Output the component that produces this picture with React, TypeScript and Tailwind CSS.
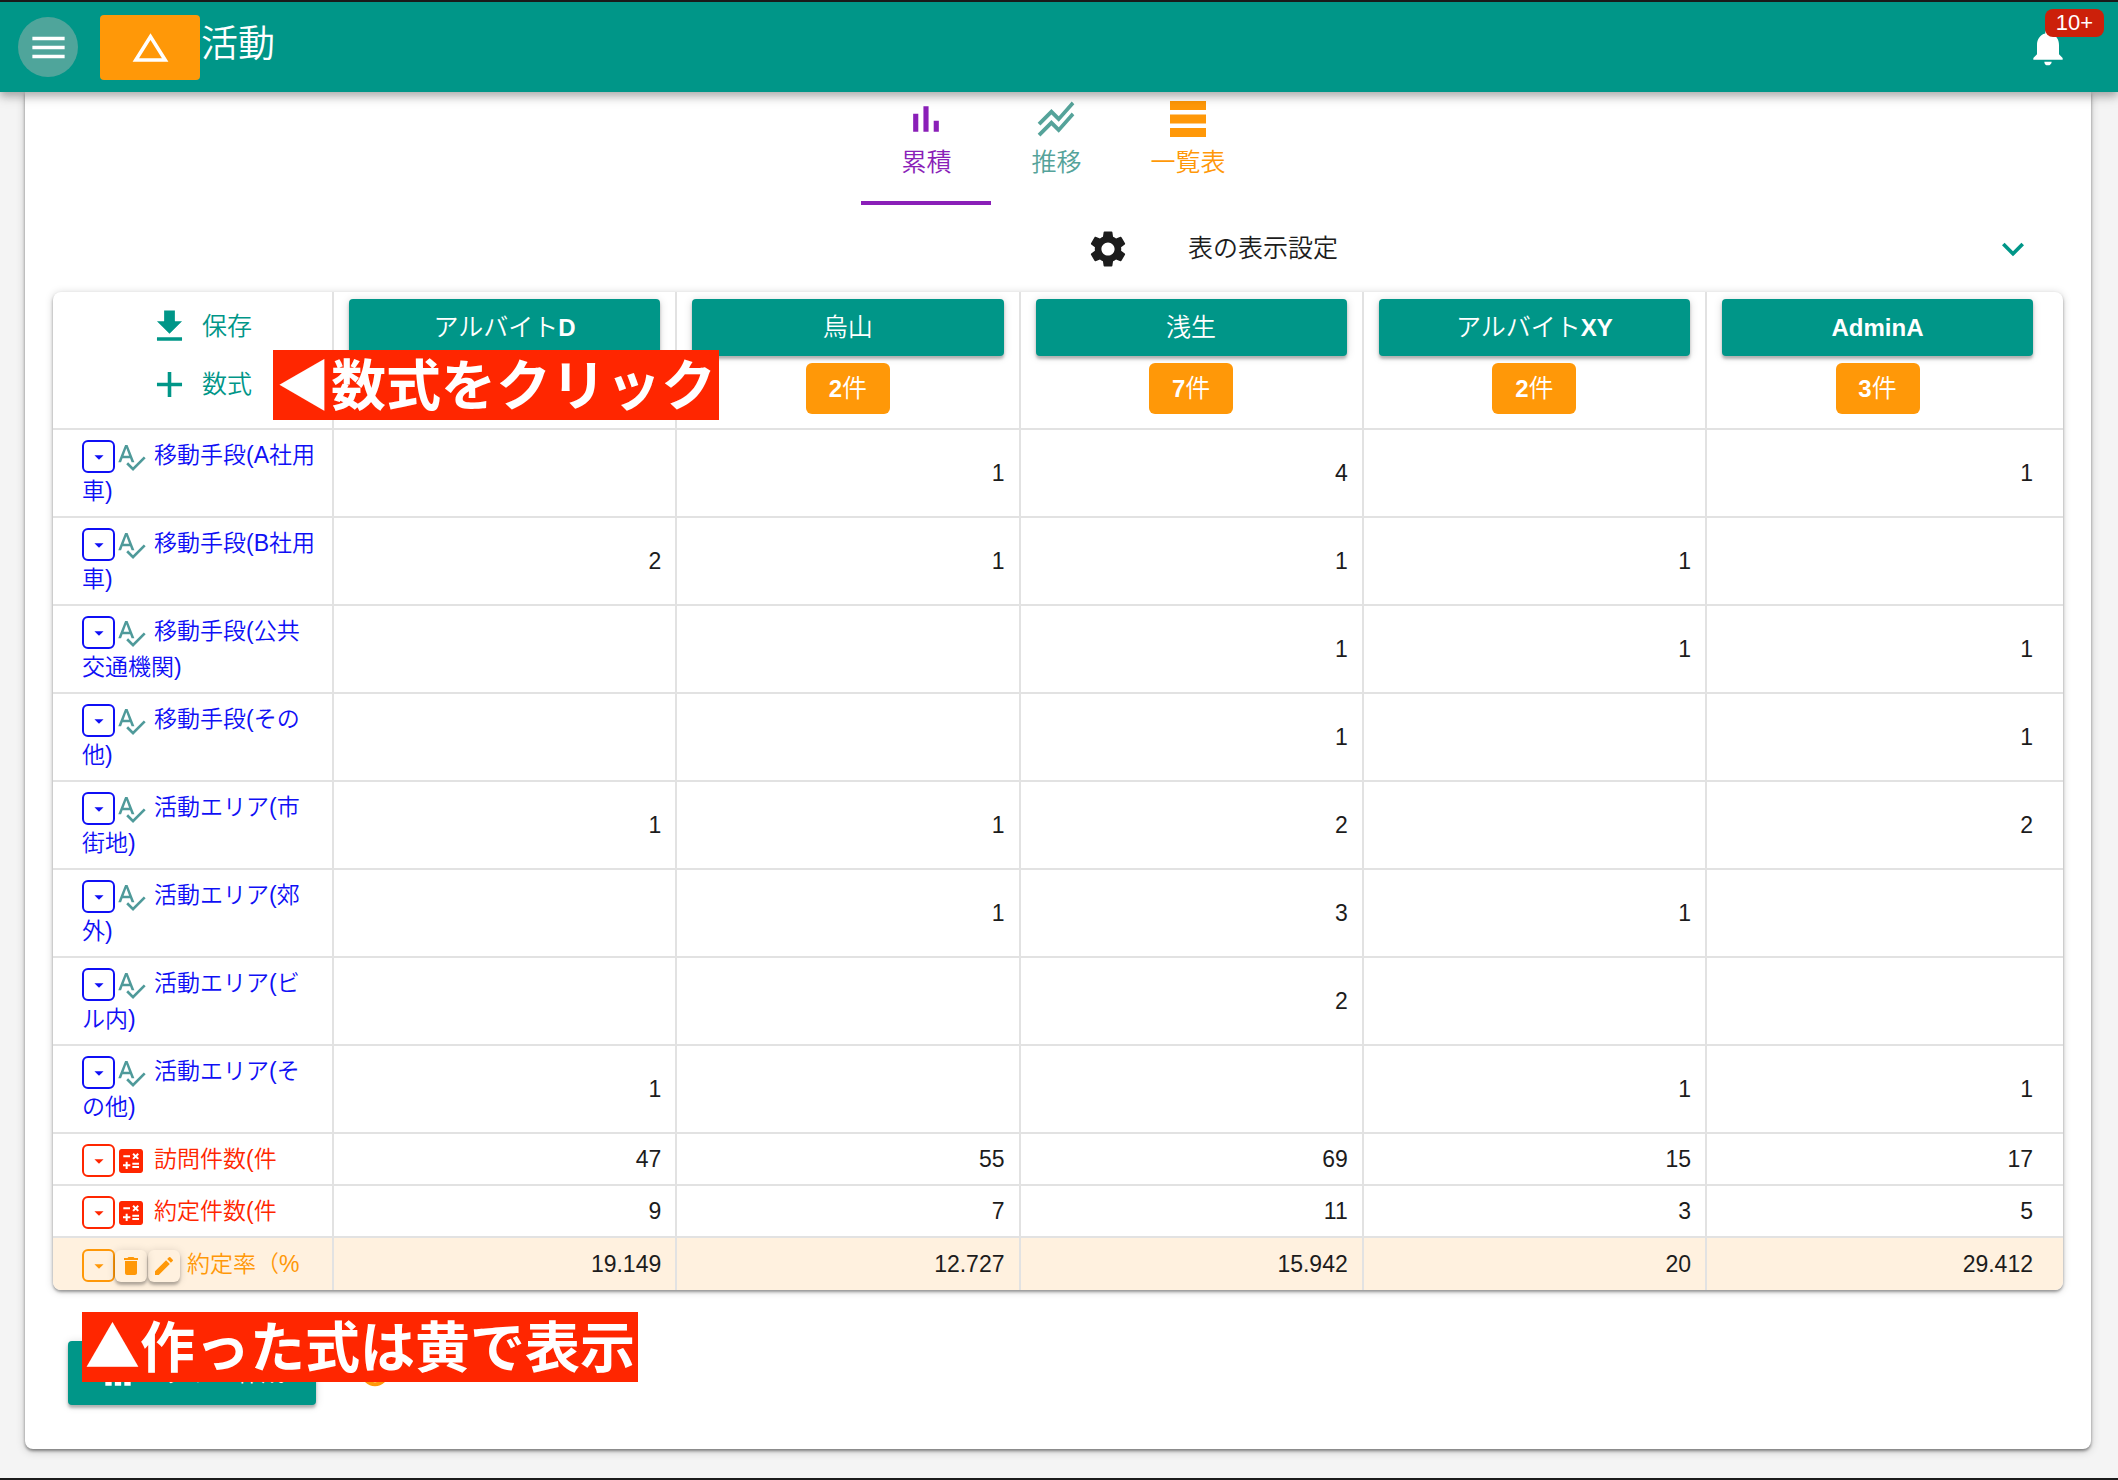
import type { ReactNode } from 'react';
import {
  MdAdd,
  MdArrowDropDown,
  MdBarChart,
  MdCalculate,
  MdChangeHistory,
  MdDelete,
  MdEdit,
  MdExpandMore,
  MdFileDownload,
  MdHelp,
  MdMenu,
  MdNotifications,
  MdSettings,
  MdSpellcheck,
  MdStackedLineChart,
} from 'react-icons/md';

type Kind = 'choice' | 'sum' | 'formula';

type Row = {
  kind: Kind;
  label: string;
  rest?: string;
  values: string[];
};

type Person = { name: string; latin?: string; count?: string };

const people: Person[] = [
  { name: 'アルバイト', latin: 'D' },
  { name: '烏山', count: '2' },
  { name: '浅生', count: '7' },
  { name: 'アルバイト', latin: 'XY', count: '2' },
  { name: '', latin: 'AdminA', count: '3' },
];

const rows: Row[] = [
  { kind: 'choice', label: '移動手段(A社用', rest: '車)', values: ['', '1', '4', '', '1'] },
  { kind: 'choice', label: '移動手段(B社用', rest: '車)', values: ['2', '1', '1', '1', ''] },
  { kind: 'choice', label: '移動手段(公共', rest: '交通機関)', values: ['', '', '1', '1', '1'] },
  { kind: 'choice', label: '移動手段(その', rest: '他)', values: ['', '', '1', '', '1'] },
  { kind: 'choice', label: '活動エリア(市', rest: '街地)', values: ['1', '1', '2', '', '2'] },
  { kind: 'choice', label: '活動エリア(郊', rest: '外)', values: ['', '1', '3', '1', ''] },
  { kind: 'choice', label: '活動エリア(ビ', rest: 'ル内)', values: ['', '', '2', '', ''] },
  { kind: 'choice', label: '活動エリア(そ', rest: 'の他)', values: ['1', '', '', '1', '1'] },
  { kind: 'sum', label: '訪問件数(件', values: ['47', '55', '69', '15', '17'] },
  { kind: 'sum', label: '約定件数(件', values: ['9', '7', '11', '3', '5'] },
  { kind: 'formula', label: '約定率（%', values: ['19.149', '12.727', '15.942', '20', '29.412'] },
];

const kindText: Record<Kind, string> = {
  choice: 'text-[#0f0ff5]',
  sum: 'text-[#ff2600]',
  formula: 'text-[#ff9808]',
};

const raised = 'shadow-[0_3px_3px_rgba(0,0,0,0.25),0_1px_8px_rgba(0,0,0,0.15)]';

const note =
  "absolute bg-[#ff2600] px-[3px] pb-2 font-['Noto_Sans_CJK_JP',sans-serif] text-[55px] leading-[62px] font-bold whitespace-nowrap text-white";

function RowsIcon() {
  return (
    <svg viewBox="0 0 36 36" className="my-1 h-9 w-9" fill="currentColor" aria-hidden="true">
      <rect width="36" height="9" />
      <rect y="13.5" width="36" height="9" />
      <rect y="27" width="36" height="9" />
    </svg>
  );
}

function BarsIcon() {
  return (
    <svg viewBox="0 0 24 24" className="h-11 w-11" fill="currentColor" aria-hidden="true">
      <path d="M5 9.2h2.8V19H5zM10.6 5h2.8v14h-2.8zM16.2 13H19v6h-2.8z" />
    </svg>
  );
}

function Header() {
  return (
    <header className="relative z-10 flex h-[90px] items-center bg-[#009688] pr-[14px] pl-[18px] text-white shadow-[0_4px_8px_rgba(0,0,0,0.25),0_6px_12px_rgba(0,0,0,0.1)]">
      <button
        type="button"
        aria-label="メニュー"
        className="flex h-[60px] w-[60px] items-center justify-center rounded-full bg-[#4fa59b]"
      >
        <MdMenu size={43} />
      </button>
      <button
        type="button"
        aria-label="ホーム"
        className="ml-[22px] flex h-[65px] w-[100px] items-center justify-center rounded bg-[#ff9808]"
      >
        <MdChangeHistory size={43} />
      </button>
      <h1 className="pb-1 pl-px text-[37px] leading-10 font-[350]">活動</h1>
      <button type="button" aria-label="通知" className="relative mr-[34px] ml-auto">
        <MdNotifications size={44} />
        <span className="absolute -top-4 left-[19px] flex h-7 w-[59px] items-center justify-center rounded-lg bg-[#cc200a] text-[22px] leading-7">
          10+
        </span>
      </button>
    </header>
  );
}

function Tab({ icon, label, color, active }: { icon: ReactNode; label: string; color: string; active?: boolean }) {
  return (
    <button
      type="button"
      role="tab"
      aria-selected={active ? true : false}
      className={`flex h-[113px] min-w-[130px] flex-col items-center border-b-4 px-[29px] pt-[5px] text-[25px] leading-9 font-[350] ${color} ${
        active ? 'border-[#8a1fb8]' : 'border-transparent'
      }`}
    >
      {icon}
      <span className="mt-[3px]">{label}</span>
    </button>
  );
}

function RowLabel({ row }: { row: Row }) {
  return (
    <div className={`text-[23px] leading-9 font-[350] ${kindText[row.kind]}`}>
      <div className="flex items-end whitespace-nowrap">
        <button
          type="button"
          aria-label={`${row.label} のメニュー`}
          className="flex h-[33px] w-[33px] items-center justify-center rounded-md border-2 border-current"
        >
          <MdArrowDropDown size={22} />
        </button>
        {row.kind === 'choice' && <MdSpellcheck size={32} className="text-[#4f9a9a]" />}
        {row.kind === 'sum' && <MdCalculate size={32} />}
        {row.kind === 'formula' && (
          <>
            <button type="button" aria-label="削除" className={`flex h-8 w-8 items-center justify-center rounded-md ${raised}`}>
              <MdDelete size={24} />
            </button>
            <button
              type="button"
              aria-label="編集"
              className={`ml-px flex h-8 w-8 items-center justify-center rounded-md ${raised}`}
            >
              <MdEdit size={24} />
            </button>
          </>
        )}
        <span className="ml-[7px]">{row.label}</span>
      </div>
      {row.rest}
    </div>
  );
}

function SummaryTable() {
  return (
    <div className="relative mx-7">
      <div className="overflow-hidden rounded-lg shadow-[0_2px_3px_rgba(0,0,0,0.35),0_1px_8px_rgba(0,0,0,0.18)]">
        <table className="w-full table-fixed border-separate border-spacing-0 text-[23px] text-[#1c1c1c]">
          <colgroup>
            <col className="w-[281px]" />
            <col />
            <col />
            <col />
            <col />
            <col className="w-[356px]" />
          </colgroup>
          <thead>
            <tr className="h-[138px] text-[25px]">
              <td className="border-r-2 border-b-2 border-[#e2e2e2] pt-[13px] align-top">
                <div className="flex flex-col items-start gap-[15px] pl-[95px] font-[350] text-[#009688]">
                  <button type="button" className="flex items-center gap-[11px] leading-[43px]">
                    <MdFileDownload size={43} />
                    保存
                  </button>
                  <button type="button" className="flex items-center gap-[11px] leading-[43px]">
                    <MdAdd size={43} />
                    数式
                  </button>
                </div>
              </td>
              {people.map((p, i) => (
                <th
                  key={i}
                  scope="col"
                  className="border-r-2 border-b-2 border-[#e2e2e2] px-[15px] pt-[7px] align-top font-[350] last:border-r-0 last:pr-[30px]"
                >
                  <div className="flex flex-col items-center gap-[7px]">
                    <button
                      type="button"
                      className={`h-[57px] w-full rounded bg-[#009688] leading-[57px] text-white ${raised}`}
                    >
                      {p.name}
                      <span className="text-[24px] font-bold">{p.latin}</span>
                    </button>
                    {p.count && (
                      <span className="flex h-[51px] w-[84px] items-center justify-center rounded-md bg-[#ff9808] text-white">
                        <span className="text-[24px] font-bold">{p.count}</span>件
                      </span>
                    )}
                  </div>
                </th>
              ))}
            </tr>
          </thead>
          <tbody>
            {rows.map((row) => (
              <tr
                key={row.label}
                className={row.kind === 'choice' ? 'h-[88px]' : row.kind === 'sum' ? 'h-[52px]' : 'h-[52px] bg-[#fff1df]'}
              >
                <th
                  scope="row"
                  className={`border-r-2 border-[#e2e2e2] pl-[29px] text-left ${row.kind === 'formula' ? '' : 'border-b-2'}`}
                >
                  <RowLabel row={row} />
                </th>
                {row.values.map((v, i) => (
                  <td
                    key={i}
                    className={`border-r-2 border-[#e2e2e2] pr-[14px] text-right leading-9 last:border-r-0 last:pr-[30px] ${
                      row.kind === 'formula' ? '' : 'border-b-2'
                    }`}
                  >
                    {v}
                  </td>
                ))}
              </tr>
            ))}
          </tbody>
        </table>
      </div>
      <div className={`top-[58px] left-[220px] ${note}`}>◀数式をクリック</div>
    </div>
  );
}

export default function App() {
  return (
    <div className="flex min-h-screen flex-col border-y-2 border-[#1c1c1c] bg-[#f4f4f4] font-['Liberation_Sans','Noto_Sans_CJK_JP',sans-serif]">
      <Header />
      <main className="mr-[27px] mb-7 ml-[25px] rounded-b-lg bg-white pb-11 shadow-[0_2px_3px_rgba(0,0,0,0.4),0_2px_10px_rgba(0,0,0,0.2)]">
        <div role="tablist" className="flex justify-center">
          <Tab icon={<BarsIcon />} label="累積" color="text-[#8a1fb8]" active />
          <Tab icon={<MdStackedLineChart size={44} />} label="推移" color="text-[#55a39a]" />
          <Tab icon={<RowsIcon />} label="一覧表" color="text-[#ff9808]" />
        </div>
        <button type="button" className="grid h-[87px] w-full grid-cols-2 px-7 text-[25px] font-[350] text-[#1c1c1c]">
          <span className="col-start-2 flex h-full items-center px-7">
            <MdSettings size={44} />
            <span className="ml-[58px]">表の表示設定</span>
            <MdExpandMore size={44} className="ml-auto text-[#009688]" />
          </span>
        </button>
        <SummaryTable />
        <div className="relative mt-[51px] ml-[43px] flex items-center">
          <button
            type="button"
            className={`flex h-16 w-[248px] items-center justify-center gap-7 rounded bg-[#009688] text-[24px] font-[350] text-white ${raised}`}
          >
            <MdBarChart size={38} />
            グラフ作成
          </button>
          <button type="button" aria-label="ヘルプ" className="ml-[43px] text-[#ff9808]">
            <MdHelp size={32} />
          </button>
          <div className={`-top-[29px] left-[14px] ${note}`}>▲作った式は黄で表示</div>
        </div>
      </main>
    </div>
  );
}
